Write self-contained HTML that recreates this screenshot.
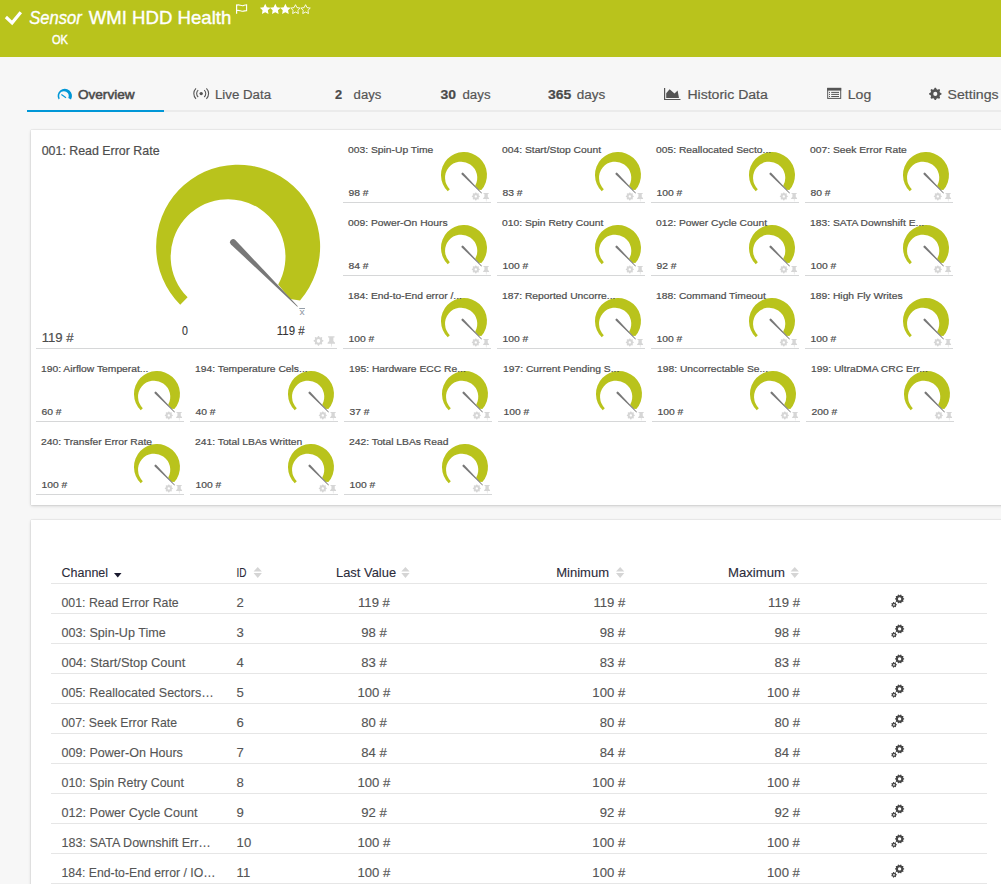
<!DOCTYPE html>
<html><head><meta charset="utf-8"><style>
html,body{margin:0;padding:0}
body{width:1001px;height:884px;overflow:hidden;position:relative;background:#f7f7f7;font-family:"Liberation Sans", sans-serif}
svg{overflow:visible}
</style></head><body>
<div style="position:absolute;left:0;top:0;width:1001px;height:57px;background:#b9c31c"></div>
<svg style="position:absolute;left:0;top:0" width="330" height="57"><path d="M5.9 17.0 L12.1 22.8 L20.8 12.3" fill="none" stroke="#fff" stroke-width="3.2"/><path d="M236.6 4.5 L236.6 13.8" stroke="#fff" stroke-width="1.2"/><path d="M236.6 5.2 C239 4 241 6.2 243.2 5.6 C244.6 5.2 245.6 4.8 246.6 4.8 L246.6 10.6 C245 10.6 244 11.4 242 11.2 C240 11 239 9.8 236.6 10.6" fill="none" stroke="#fff" stroke-width="1.1"/><path d="M265.20 3.80 L266.85 7.13 L270.53 7.67 L267.86 10.27 L268.49 13.93 L265.20 12.20 L261.91 13.93 L262.54 10.27 L259.87 7.67 L263.55 7.13 Z" fill="#fff"/><path d="M275.30 3.80 L276.95 7.13 L280.63 7.67 L277.96 10.27 L278.59 13.93 L275.30 12.20 L272.01 13.93 L272.64 10.27 L269.97 7.67 L273.65 7.13 Z" fill="#fff"/><path d="M285.40 3.80 L287.05 7.13 L290.73 7.67 L288.06 10.27 L288.69 13.93 L285.40 12.20 L282.11 13.93 L282.74 10.27 L280.07 7.67 L283.75 7.13 Z" fill="#fff"/><path d="M295.50 4.70 L296.94 7.62 L300.16 8.09 L297.83 10.36 L298.38 13.56 L295.50 12.05 L292.62 13.56 L293.17 10.36 L290.84 8.09 L294.06 7.62 Z" fill="none" stroke="#fff" stroke-width="0.9"/><path d="M305.60 4.70 L307.04 7.62 L310.26 8.09 L307.93 10.36 L308.48 13.56 L305.60 12.05 L302.72 13.56 L303.27 10.36 L300.94 8.09 L304.16 7.62 Z" fill="none" stroke="#fff" stroke-width="0.9"/></svg>
<div style="position:absolute;left:27px;top:110px;width:974px;height:2px;background:#ebebeb"></div>
<div style="position:absolute;left:27px;top:110px;width:137px;height:2px;background:#0097d7"></div>
<svg style="position:absolute;left:0;top:80px" width="1001" height="30" viewBox="0 80 1001 30"><path fill="#0097d7" d="M58.6 99.6 A7.2 7.2 0 1 1 71.0 99.6 L68.3 97.9 A4.75 4.75 0 1 0 59.8 98.2 Z"/><path d="M61.4 94.5 L66.0 97.7" stroke="#0097d7" stroke-width="1.1"/><circle cx="201.2" cy="93.6" r="1.7" fill="#555"/><path d="M198.2 90.2 A4.5 4.5 0 0 0 198.2 97.0 M204.2 90.2 A4.5 4.5 0 0 1 204.2 97.0" fill="none" stroke="#555" stroke-width="1.1"/><path d="M196.0 88.3 A7.5 7.5 0 0 0 196.0 98.9 M206.4 88.3 A7.5 7.5 0 0 1 206.4 98.9" fill="none" stroke="#555" stroke-width="1.1"/><path fill="#555" d="M664 88 L665.2 88 L665.2 99 L680.5 99 L680.5 100 L664 100 Z"/><path fill="#555" d="M666.2 98 L666.2 93.2 L669.6 89.2 L674.5 93.5 L677.6 90.6 L679 98 Z"/><rect x="827.7" y="88.4" width="13" height="10" fill="none" stroke="#555" stroke-width="1"/><rect x="827.2" y="87.9" width="14" height="2.7" fill="#555"/><rect x="829.0" y="91.9" width="1" height="1" fill="#555"/><rect x="831.2" y="91.9" width="7.8" height="1" fill="#555"/><rect x="829.0" y="93.9" width="1" height="1" fill="#555"/><rect x="831.2" y="93.9" width="7.8" height="1" fill="#555"/><rect x="829.0" y="96.0" width="1" height="1" fill="#555"/><rect x="831.2" y="96.0" width="7.8" height="1" fill="#555"/><path fill-rule="evenodd" fill="#555" d="M941.47 93.29 L941.47 94.51 L939.93 95.30 L939.56 96.18 L940.09 97.83 L939.23 98.69 L937.58 98.16 L936.70 98.53 L935.91 100.07 L934.69 100.07 L933.90 98.53 L933.02 98.16 L931.37 98.69 L930.51 97.83 L931.04 96.18 L930.67 95.30 L929.13 94.51 L929.13 93.29 L930.67 92.50 L931.04 91.62 L930.51 89.97 L931.37 89.11 L933.02 89.64 L933.90 89.27 L934.69 87.73 L935.91 87.73 L936.70 89.27 L937.58 89.64 L939.23 89.11 L940.09 89.97 L939.56 91.62 L939.93 92.50 Z M937.35 93.90 A2.05 2.05 0 1 0 933.25 93.90 A2.05 2.05 0 1 0 937.35 93.90 Z"/></svg>
<div style="position:absolute;left:31px;top:130px;width:1000px;height:375px;background:#fff;box-shadow:0 0 1px rgba(0,0,0,0.22),0 1px 3px rgba(0,0,0,0.16)"></div>
<div style="position:absolute;left:31px;top:520px;width:1000px;height:400px;background:#fff;box-shadow:0 0 1px rgba(0,0,0,0.22),0 1px 3px rgba(0,0,0,0.16)"></div>
<svg style="position:absolute;left:0;top:0" width="1001" height="520"><rect x="36" y="348" width="301" height="1" fill="#d6d7d8"/><path fill="#b9c31c" d="M180.22 304.68 A82.00 82.00 0 1 1 300.03 300.41 L290.02 299.02 L278.22 284.50 A57.40 57.40 0 1 0 187.61 297.29 Z"/><path fill="#787878" d="M230.93 244.38 L297.32 306.73 L297.82 306.23 L235.31 240.00 A3.10 3.10 0 0 0 230.93 244.38 Z"/><path fill-rule="evenodd" fill="#d6d6d6" d="M323.38 340.32 L323.38 341.28 L322.16 341.91 L321.87 342.60 L322.29 343.91 L321.61 344.59 L320.30 344.17 L319.61 344.46 L318.98 345.68 L318.02 345.68 L317.39 344.46 L316.70 344.17 L315.39 344.59 L314.71 343.91 L315.13 342.60 L314.84 341.91 L313.62 341.28 L313.62 340.32 L314.84 339.69 L315.13 339.00 L314.71 337.69 L315.39 337.01 L316.70 337.43 L317.39 337.14 L318.02 335.92 L318.98 335.92 L319.61 337.14 L320.30 337.43 L321.61 337.01 L322.29 337.69 L321.87 339.00 L322.16 339.69 Z M320.21 340.80 A1.72 1.72 0 1 0 316.79 340.80 A1.72 1.72 0 1 0 320.21 340.80 Z"/><path fill="#d6d6d6" d="M328.10 336.20 L334.50 336.20 L334.50 337.50 L333.40 337.50 L333.40 341.00 L335.00 342.80 L335.00 343.80 L331.80 343.80 L331.60 346.70 L331.20 346.70 L331.00 343.80 L327.60 343.80 L327.60 342.80 L329.20 341.00 L329.20 337.50 L328.10 337.50 Z"/><rect x="299.2" y="308" width="5.8" height="0.9" fill="#8a94a0"/><rect x="343" y="202" width="148" height="1" fill="#d6d7d8"/><path fill="#b9c31c" d="M447.74 191.26 A23.00 23.00 0 1 1 481.34 190.06 L478.54 189.67 L475.22 185.60 A16.10 16.10 0 1 0 449.81 189.19 Z"/><path fill="#787878" d="M461.75 174.54 L481.50 193.38 L481.92 192.96 L463.39 172.93 A1.15 1.15 0 0 0 461.75 174.54 Z"/><path fill-rule="evenodd" fill="#d6d6d6" d="M479.78 196.01 L479.78 196.79 L478.86 197.33 L478.62 197.91 L478.89 198.94 L478.34 199.49 L477.31 199.22 L476.73 199.46 L476.19 200.38 L475.41 200.38 L474.87 199.46 L474.29 199.22 L473.26 199.49 L472.71 198.94 L472.98 197.91 L472.74 197.33 L471.82 196.79 L471.82 196.01 L472.74 195.47 L472.98 194.89 L472.71 193.86 L473.26 193.31 L474.29 193.58 L474.87 193.34 L475.41 192.42 L476.19 192.42 L476.73 193.34 L477.31 193.58 L478.34 193.31 L478.89 193.86 L478.62 194.89 L478.86 195.47 Z M477.00 196.40 A1.20 1.20 0 1 0 474.60 196.40 A1.20 1.20 0 1 0 477.00 196.40 Z"/><path fill="#d6d6d6" d="M483.54 193.00 L488.66 193.00 L488.66 194.04 L487.78 194.04 L487.78 196.84 L489.06 198.28 L489.06 199.08 L486.50 199.08 L486.34 201.40 L486.02 201.40 L485.86 199.08 L483.14 199.08 L483.14 198.28 L484.42 196.84 L484.42 194.04 L483.54 194.04 Z"/><rect x="497" y="202" width="148" height="1" fill="#d6d7d8"/><path fill="#b9c31c" d="M601.74 191.26 A23.00 23.00 0 1 1 635.34 190.06 L632.54 189.67 L629.22 185.60 A16.10 16.10 0 1 0 603.81 189.19 Z"/><path fill="#787878" d="M615.75 174.54 L635.50 193.38 L635.92 192.96 L617.39 172.93 A1.15 1.15 0 0 0 615.75 174.54 Z"/><path fill-rule="evenodd" fill="#d6d6d6" d="M633.78 196.01 L633.78 196.79 L632.86 197.33 L632.62 197.91 L632.89 198.94 L632.34 199.49 L631.31 199.22 L630.73 199.46 L630.19 200.38 L629.41 200.38 L628.87 199.46 L628.29 199.22 L627.26 199.49 L626.71 198.94 L626.98 197.91 L626.74 197.33 L625.82 196.79 L625.82 196.01 L626.74 195.47 L626.98 194.89 L626.71 193.86 L627.26 193.31 L628.29 193.58 L628.87 193.34 L629.41 192.42 L630.19 192.42 L630.73 193.34 L631.31 193.58 L632.34 193.31 L632.89 193.86 L632.62 194.89 L632.86 195.47 Z M631.00 196.40 A1.20 1.20 0 1 0 628.60 196.40 A1.20 1.20 0 1 0 631.00 196.40 Z"/><path fill="#d6d6d6" d="M637.54 193.00 L642.66 193.00 L642.66 194.04 L641.78 194.04 L641.78 196.84 L643.06 198.28 L643.06 199.08 L640.50 199.08 L640.34 201.40 L640.02 201.40 L639.86 199.08 L637.14 199.08 L637.14 198.28 L638.42 196.84 L638.42 194.04 L637.54 194.04 Z"/><rect x="651" y="202" width="148" height="1" fill="#d6d7d8"/><path fill="#b9c31c" d="M755.74 191.26 A23.00 23.00 0 1 1 789.34 190.06 L786.54 189.67 L783.22 185.60 A16.10 16.10 0 1 0 757.81 189.19 Z"/><path fill="#787878" d="M769.75 174.54 L789.50 193.38 L789.92 192.96 L771.39 172.93 A1.15 1.15 0 0 0 769.75 174.54 Z"/><path fill-rule="evenodd" fill="#d6d6d6" d="M787.78 196.01 L787.78 196.79 L786.86 197.33 L786.62 197.91 L786.89 198.94 L786.34 199.49 L785.31 199.22 L784.73 199.46 L784.19 200.38 L783.41 200.38 L782.87 199.46 L782.29 199.22 L781.26 199.49 L780.71 198.94 L780.98 197.91 L780.74 197.33 L779.82 196.79 L779.82 196.01 L780.74 195.47 L780.98 194.89 L780.71 193.86 L781.26 193.31 L782.29 193.58 L782.87 193.34 L783.41 192.42 L784.19 192.42 L784.73 193.34 L785.31 193.58 L786.34 193.31 L786.89 193.86 L786.62 194.89 L786.86 195.47 Z M785.00 196.40 A1.20 1.20 0 1 0 782.60 196.40 A1.20 1.20 0 1 0 785.00 196.40 Z"/><path fill="#d6d6d6" d="M791.54 193.00 L796.66 193.00 L796.66 194.04 L795.78 194.04 L795.78 196.84 L797.06 198.28 L797.06 199.08 L794.50 199.08 L794.34 201.40 L794.02 201.40 L793.86 199.08 L791.14 199.08 L791.14 198.28 L792.42 196.84 L792.42 194.04 L791.54 194.04 Z"/><rect x="805" y="202" width="148" height="1" fill="#d6d7d8"/><path fill="#b9c31c" d="M909.74 191.26 A23.00 23.00 0 1 1 943.34 190.06 L940.54 189.67 L937.22 185.60 A16.10 16.10 0 1 0 911.81 189.19 Z"/><path fill="#787878" d="M923.75 174.54 L943.50 193.38 L943.92 192.96 L925.39 172.93 A1.15 1.15 0 0 0 923.75 174.54 Z"/><path fill-rule="evenodd" fill="#d6d6d6" d="M941.78 196.01 L941.78 196.79 L940.86 197.33 L940.62 197.91 L940.89 198.94 L940.34 199.49 L939.31 199.22 L938.73 199.46 L938.19 200.38 L937.41 200.38 L936.87 199.46 L936.29 199.22 L935.26 199.49 L934.71 198.94 L934.98 197.91 L934.74 197.33 L933.82 196.79 L933.82 196.01 L934.74 195.47 L934.98 194.89 L934.71 193.86 L935.26 193.31 L936.29 193.58 L936.87 193.34 L937.41 192.42 L938.19 192.42 L938.73 193.34 L939.31 193.58 L940.34 193.31 L940.89 193.86 L940.62 194.89 L940.86 195.47 Z M939.00 196.40 A1.20 1.20 0 1 0 936.60 196.40 A1.20 1.20 0 1 0 939.00 196.40 Z"/><path fill="#d6d6d6" d="M945.54 193.00 L950.66 193.00 L950.66 194.04 L949.78 194.04 L949.78 196.84 L951.06 198.28 L951.06 199.08 L948.50 199.08 L948.34 201.40 L948.02 201.40 L947.86 199.08 L945.14 199.08 L945.14 198.28 L946.42 196.84 L946.42 194.04 L945.54 194.04 Z"/><rect x="343" y="275" width="148" height="1" fill="#d6d7d8"/><path fill="#b9c31c" d="M447.74 264.26 A23.00 23.00 0 1 1 481.34 263.06 L478.54 262.67 L475.22 258.60 A16.10 16.10 0 1 0 449.81 262.19 Z"/><path fill="#787878" d="M461.75 247.54 L481.50 266.38 L481.92 265.96 L463.39 245.93 A1.15 1.15 0 0 0 461.75 247.54 Z"/><path fill-rule="evenodd" fill="#d6d6d6" d="M479.78 269.01 L479.78 269.79 L478.86 270.33 L478.62 270.91 L478.89 271.94 L478.34 272.49 L477.31 272.22 L476.73 272.46 L476.19 273.38 L475.41 273.38 L474.87 272.46 L474.29 272.22 L473.26 272.49 L472.71 271.94 L472.98 270.91 L472.74 270.33 L471.82 269.79 L471.82 269.01 L472.74 268.47 L472.98 267.89 L472.71 266.86 L473.26 266.31 L474.29 266.58 L474.87 266.34 L475.41 265.42 L476.19 265.42 L476.73 266.34 L477.31 266.58 L478.34 266.31 L478.89 266.86 L478.62 267.89 L478.86 268.47 Z M477.00 269.40 A1.20 1.20 0 1 0 474.60 269.40 A1.20 1.20 0 1 0 477.00 269.40 Z"/><path fill="#d6d6d6" d="M483.54 266.00 L488.66 266.00 L488.66 267.04 L487.78 267.04 L487.78 269.84 L489.06 271.28 L489.06 272.08 L486.50 272.08 L486.34 274.40 L486.02 274.40 L485.86 272.08 L483.14 272.08 L483.14 271.28 L484.42 269.84 L484.42 267.04 L483.54 267.04 Z"/><rect x="497" y="275" width="148" height="1" fill="#d6d7d8"/><path fill="#b9c31c" d="M601.74 264.26 A23.00 23.00 0 1 1 635.34 263.06 L632.54 262.67 L629.22 258.60 A16.10 16.10 0 1 0 603.81 262.19 Z"/><path fill="#787878" d="M615.75 247.54 L635.50 266.38 L635.92 265.96 L617.39 245.93 A1.15 1.15 0 0 0 615.75 247.54 Z"/><path fill-rule="evenodd" fill="#d6d6d6" d="M633.78 269.01 L633.78 269.79 L632.86 270.33 L632.62 270.91 L632.89 271.94 L632.34 272.49 L631.31 272.22 L630.73 272.46 L630.19 273.38 L629.41 273.38 L628.87 272.46 L628.29 272.22 L627.26 272.49 L626.71 271.94 L626.98 270.91 L626.74 270.33 L625.82 269.79 L625.82 269.01 L626.74 268.47 L626.98 267.89 L626.71 266.86 L627.26 266.31 L628.29 266.58 L628.87 266.34 L629.41 265.42 L630.19 265.42 L630.73 266.34 L631.31 266.58 L632.34 266.31 L632.89 266.86 L632.62 267.89 L632.86 268.47 Z M631.00 269.40 A1.20 1.20 0 1 0 628.60 269.40 A1.20 1.20 0 1 0 631.00 269.40 Z"/><path fill="#d6d6d6" d="M637.54 266.00 L642.66 266.00 L642.66 267.04 L641.78 267.04 L641.78 269.84 L643.06 271.28 L643.06 272.08 L640.50 272.08 L640.34 274.40 L640.02 274.40 L639.86 272.08 L637.14 272.08 L637.14 271.28 L638.42 269.84 L638.42 267.04 L637.54 267.04 Z"/><rect x="651" y="275" width="148" height="1" fill="#d6d7d8"/><path fill="#b9c31c" d="M755.74 264.26 A23.00 23.00 0 1 1 789.34 263.06 L786.54 262.67 L783.22 258.60 A16.10 16.10 0 1 0 757.81 262.19 Z"/><path fill="#787878" d="M769.75 247.54 L789.50 266.38 L789.92 265.96 L771.39 245.93 A1.15 1.15 0 0 0 769.75 247.54 Z"/><path fill-rule="evenodd" fill="#d6d6d6" d="M787.78 269.01 L787.78 269.79 L786.86 270.33 L786.62 270.91 L786.89 271.94 L786.34 272.49 L785.31 272.22 L784.73 272.46 L784.19 273.38 L783.41 273.38 L782.87 272.46 L782.29 272.22 L781.26 272.49 L780.71 271.94 L780.98 270.91 L780.74 270.33 L779.82 269.79 L779.82 269.01 L780.74 268.47 L780.98 267.89 L780.71 266.86 L781.26 266.31 L782.29 266.58 L782.87 266.34 L783.41 265.42 L784.19 265.42 L784.73 266.34 L785.31 266.58 L786.34 266.31 L786.89 266.86 L786.62 267.89 L786.86 268.47 Z M785.00 269.40 A1.20 1.20 0 1 0 782.60 269.40 A1.20 1.20 0 1 0 785.00 269.40 Z"/><path fill="#d6d6d6" d="M791.54 266.00 L796.66 266.00 L796.66 267.04 L795.78 267.04 L795.78 269.84 L797.06 271.28 L797.06 272.08 L794.50 272.08 L794.34 274.40 L794.02 274.40 L793.86 272.08 L791.14 272.08 L791.14 271.28 L792.42 269.84 L792.42 267.04 L791.54 267.04 Z"/><rect x="805" y="275" width="148" height="1" fill="#d6d7d8"/><path fill="#b9c31c" d="M909.74 264.26 A23.00 23.00 0 1 1 943.34 263.06 L940.54 262.67 L937.22 258.60 A16.10 16.10 0 1 0 911.81 262.19 Z"/><path fill="#787878" d="M923.75 247.54 L943.50 266.38 L943.92 265.96 L925.39 245.93 A1.15 1.15 0 0 0 923.75 247.54 Z"/><path fill-rule="evenodd" fill="#d6d6d6" d="M941.78 269.01 L941.78 269.79 L940.86 270.33 L940.62 270.91 L940.89 271.94 L940.34 272.49 L939.31 272.22 L938.73 272.46 L938.19 273.38 L937.41 273.38 L936.87 272.46 L936.29 272.22 L935.26 272.49 L934.71 271.94 L934.98 270.91 L934.74 270.33 L933.82 269.79 L933.82 269.01 L934.74 268.47 L934.98 267.89 L934.71 266.86 L935.26 266.31 L936.29 266.58 L936.87 266.34 L937.41 265.42 L938.19 265.42 L938.73 266.34 L939.31 266.58 L940.34 266.31 L940.89 266.86 L940.62 267.89 L940.86 268.47 Z M939.00 269.40 A1.20 1.20 0 1 0 936.60 269.40 A1.20 1.20 0 1 0 939.00 269.40 Z"/><path fill="#d6d6d6" d="M945.54 266.00 L950.66 266.00 L950.66 267.04 L949.78 267.04 L949.78 269.84 L951.06 271.28 L951.06 272.08 L948.50 272.08 L948.34 274.40 L948.02 274.40 L947.86 272.08 L945.14 272.08 L945.14 271.28 L946.42 269.84 L946.42 267.04 L945.54 267.04 Z"/><rect x="343" y="348" width="148" height="1" fill="#d6d7d8"/><path fill="#b9c31c" d="M447.74 337.26 A23.00 23.00 0 1 1 481.34 336.06 L478.54 335.67 L475.22 331.60 A16.10 16.10 0 1 0 449.81 335.19 Z"/><path fill="#787878" d="M461.75 320.54 L481.50 339.38 L481.92 338.96 L463.39 318.93 A1.15 1.15 0 0 0 461.75 320.54 Z"/><path fill-rule="evenodd" fill="#d6d6d6" d="M479.78 342.01 L479.78 342.79 L478.86 343.33 L478.62 343.91 L478.89 344.94 L478.34 345.49 L477.31 345.22 L476.73 345.46 L476.19 346.38 L475.41 346.38 L474.87 345.46 L474.29 345.22 L473.26 345.49 L472.71 344.94 L472.98 343.91 L472.74 343.33 L471.82 342.79 L471.82 342.01 L472.74 341.47 L472.98 340.89 L472.71 339.86 L473.26 339.31 L474.29 339.58 L474.87 339.34 L475.41 338.42 L476.19 338.42 L476.73 339.34 L477.31 339.58 L478.34 339.31 L478.89 339.86 L478.62 340.89 L478.86 341.47 Z M477.00 342.40 A1.20 1.20 0 1 0 474.60 342.40 A1.20 1.20 0 1 0 477.00 342.40 Z"/><path fill="#d6d6d6" d="M483.54 339.00 L488.66 339.00 L488.66 340.04 L487.78 340.04 L487.78 342.84 L489.06 344.28 L489.06 345.08 L486.50 345.08 L486.34 347.40 L486.02 347.40 L485.86 345.08 L483.14 345.08 L483.14 344.28 L484.42 342.84 L484.42 340.04 L483.54 340.04 Z"/><rect x="497" y="348" width="148" height="1" fill="#d6d7d8"/><path fill="#b9c31c" d="M601.74 337.26 A23.00 23.00 0 1 1 635.34 336.06 L632.54 335.67 L629.22 331.60 A16.10 16.10 0 1 0 603.81 335.19 Z"/><path fill="#787878" d="M615.75 320.54 L635.50 339.38 L635.92 338.96 L617.39 318.93 A1.15 1.15 0 0 0 615.75 320.54 Z"/><path fill-rule="evenodd" fill="#d6d6d6" d="M633.78 342.01 L633.78 342.79 L632.86 343.33 L632.62 343.91 L632.89 344.94 L632.34 345.49 L631.31 345.22 L630.73 345.46 L630.19 346.38 L629.41 346.38 L628.87 345.46 L628.29 345.22 L627.26 345.49 L626.71 344.94 L626.98 343.91 L626.74 343.33 L625.82 342.79 L625.82 342.01 L626.74 341.47 L626.98 340.89 L626.71 339.86 L627.26 339.31 L628.29 339.58 L628.87 339.34 L629.41 338.42 L630.19 338.42 L630.73 339.34 L631.31 339.58 L632.34 339.31 L632.89 339.86 L632.62 340.89 L632.86 341.47 Z M631.00 342.40 A1.20 1.20 0 1 0 628.60 342.40 A1.20 1.20 0 1 0 631.00 342.40 Z"/><path fill="#d6d6d6" d="M637.54 339.00 L642.66 339.00 L642.66 340.04 L641.78 340.04 L641.78 342.84 L643.06 344.28 L643.06 345.08 L640.50 345.08 L640.34 347.40 L640.02 347.40 L639.86 345.08 L637.14 345.08 L637.14 344.28 L638.42 342.84 L638.42 340.04 L637.54 340.04 Z"/><rect x="651" y="348" width="148" height="1" fill="#d6d7d8"/><path fill="#b9c31c" d="M755.74 337.26 A23.00 23.00 0 1 1 789.34 336.06 L786.54 335.67 L783.22 331.60 A16.10 16.10 0 1 0 757.81 335.19 Z"/><path fill="#787878" d="M769.75 320.54 L789.50 339.38 L789.92 338.96 L771.39 318.93 A1.15 1.15 0 0 0 769.75 320.54 Z"/><path fill-rule="evenodd" fill="#d6d6d6" d="M787.78 342.01 L787.78 342.79 L786.86 343.33 L786.62 343.91 L786.89 344.94 L786.34 345.49 L785.31 345.22 L784.73 345.46 L784.19 346.38 L783.41 346.38 L782.87 345.46 L782.29 345.22 L781.26 345.49 L780.71 344.94 L780.98 343.91 L780.74 343.33 L779.82 342.79 L779.82 342.01 L780.74 341.47 L780.98 340.89 L780.71 339.86 L781.26 339.31 L782.29 339.58 L782.87 339.34 L783.41 338.42 L784.19 338.42 L784.73 339.34 L785.31 339.58 L786.34 339.31 L786.89 339.86 L786.62 340.89 L786.86 341.47 Z M785.00 342.40 A1.20 1.20 0 1 0 782.60 342.40 A1.20 1.20 0 1 0 785.00 342.40 Z"/><path fill="#d6d6d6" d="M791.54 339.00 L796.66 339.00 L796.66 340.04 L795.78 340.04 L795.78 342.84 L797.06 344.28 L797.06 345.08 L794.50 345.08 L794.34 347.40 L794.02 347.40 L793.86 345.08 L791.14 345.08 L791.14 344.28 L792.42 342.84 L792.42 340.04 L791.54 340.04 Z"/><rect x="805" y="348" width="148" height="1" fill="#d6d7d8"/><path fill="#b9c31c" d="M909.74 337.26 A23.00 23.00 0 1 1 943.34 336.06 L940.54 335.67 L937.22 331.60 A16.10 16.10 0 1 0 911.81 335.19 Z"/><path fill="#787878" d="M923.75 320.54 L943.50 339.38 L943.92 338.96 L925.39 318.93 A1.15 1.15 0 0 0 923.75 320.54 Z"/><path fill-rule="evenodd" fill="#d6d6d6" d="M941.78 342.01 L941.78 342.79 L940.86 343.33 L940.62 343.91 L940.89 344.94 L940.34 345.49 L939.31 345.22 L938.73 345.46 L938.19 346.38 L937.41 346.38 L936.87 345.46 L936.29 345.22 L935.26 345.49 L934.71 344.94 L934.98 343.91 L934.74 343.33 L933.82 342.79 L933.82 342.01 L934.74 341.47 L934.98 340.89 L934.71 339.86 L935.26 339.31 L936.29 339.58 L936.87 339.34 L937.41 338.42 L938.19 338.42 L938.73 339.34 L939.31 339.58 L940.34 339.31 L940.89 339.86 L940.62 340.89 L940.86 341.47 Z M939.00 342.40 A1.20 1.20 0 1 0 936.60 342.40 A1.20 1.20 0 1 0 939.00 342.40 Z"/><path fill="#d6d6d6" d="M945.54 339.00 L950.66 339.00 L950.66 340.04 L949.78 340.04 L949.78 342.84 L951.06 344.28 L951.06 345.08 L948.50 345.08 L948.34 347.40 L948.02 347.40 L947.86 345.08 L945.14 345.08 L945.14 344.28 L946.42 342.84 L946.42 340.04 L945.54 340.04 Z"/><rect x="36" y="421" width="148" height="1" fill="#d6d7d8"/><path fill="#b9c31c" d="M140.74 410.26 A23.00 23.00 0 1 1 174.34 409.06 L171.54 408.67 L168.22 404.60 A16.10 16.10 0 1 0 142.81 408.19 Z"/><path fill="#787878" d="M154.75 393.54 L174.50 412.38 L174.92 411.96 L156.39 391.93 A1.15 1.15 0 0 0 154.75 393.54 Z"/><path fill-rule="evenodd" fill="#d6d6d6" d="M172.78 415.01 L172.78 415.79 L171.86 416.33 L171.62 416.91 L171.89 417.94 L171.34 418.49 L170.31 418.22 L169.73 418.46 L169.19 419.38 L168.41 419.38 L167.87 418.46 L167.29 418.22 L166.26 418.49 L165.71 417.94 L165.98 416.91 L165.74 416.33 L164.82 415.79 L164.82 415.01 L165.74 414.47 L165.98 413.89 L165.71 412.86 L166.26 412.31 L167.29 412.58 L167.87 412.34 L168.41 411.42 L169.19 411.42 L169.73 412.34 L170.31 412.58 L171.34 412.31 L171.89 412.86 L171.62 413.89 L171.86 414.47 Z M170.00 415.40 A1.20 1.20 0 1 0 167.60 415.40 A1.20 1.20 0 1 0 170.00 415.40 Z"/><path fill="#d6d6d6" d="M176.54 412.00 L181.66 412.00 L181.66 413.04 L180.78 413.04 L180.78 415.84 L182.06 417.28 L182.06 418.08 L179.50 418.08 L179.34 420.40 L179.02 420.40 L178.86 418.08 L176.14 418.08 L176.14 417.28 L177.42 415.84 L177.42 413.04 L176.54 413.04 Z"/><rect x="190" y="421" width="148" height="1" fill="#d6d7d8"/><path fill="#b9c31c" d="M294.74 410.26 A23.00 23.00 0 1 1 328.34 409.06 L325.54 408.67 L322.22 404.60 A16.10 16.10 0 1 0 296.81 408.19 Z"/><path fill="#787878" d="M308.75 393.54 L328.50 412.38 L328.92 411.96 L310.39 391.93 A1.15 1.15 0 0 0 308.75 393.54 Z"/><path fill-rule="evenodd" fill="#d6d6d6" d="M326.78 415.01 L326.78 415.79 L325.86 416.33 L325.62 416.91 L325.89 417.94 L325.34 418.49 L324.31 418.22 L323.73 418.46 L323.19 419.38 L322.41 419.38 L321.87 418.46 L321.29 418.22 L320.26 418.49 L319.71 417.94 L319.98 416.91 L319.74 416.33 L318.82 415.79 L318.82 415.01 L319.74 414.47 L319.98 413.89 L319.71 412.86 L320.26 412.31 L321.29 412.58 L321.87 412.34 L322.41 411.42 L323.19 411.42 L323.73 412.34 L324.31 412.58 L325.34 412.31 L325.89 412.86 L325.62 413.89 L325.86 414.47 Z M324.00 415.40 A1.20 1.20 0 1 0 321.60 415.40 A1.20 1.20 0 1 0 324.00 415.40 Z"/><path fill="#d6d6d6" d="M330.54 412.00 L335.66 412.00 L335.66 413.04 L334.78 413.04 L334.78 415.84 L336.06 417.28 L336.06 418.08 L333.50 418.08 L333.34 420.40 L333.02 420.40 L332.86 418.08 L330.14 418.08 L330.14 417.28 L331.42 415.84 L331.42 413.04 L330.54 413.04 Z"/><rect x="344" y="421" width="148" height="1" fill="#d6d7d8"/><path fill="#b9c31c" d="M448.74 410.26 A23.00 23.00 0 1 1 482.34 409.06 L479.54 408.67 L476.22 404.60 A16.10 16.10 0 1 0 450.81 408.19 Z"/><path fill="#787878" d="M462.75 393.54 L482.50 412.38 L482.92 411.96 L464.39 391.93 A1.15 1.15 0 0 0 462.75 393.54 Z"/><path fill-rule="evenodd" fill="#d6d6d6" d="M480.78 415.01 L480.78 415.79 L479.86 416.33 L479.62 416.91 L479.89 417.94 L479.34 418.49 L478.31 418.22 L477.73 418.46 L477.19 419.38 L476.41 419.38 L475.87 418.46 L475.29 418.22 L474.26 418.49 L473.71 417.94 L473.98 416.91 L473.74 416.33 L472.82 415.79 L472.82 415.01 L473.74 414.47 L473.98 413.89 L473.71 412.86 L474.26 412.31 L475.29 412.58 L475.87 412.34 L476.41 411.42 L477.19 411.42 L477.73 412.34 L478.31 412.58 L479.34 412.31 L479.89 412.86 L479.62 413.89 L479.86 414.47 Z M478.00 415.40 A1.20 1.20 0 1 0 475.60 415.40 A1.20 1.20 0 1 0 478.00 415.40 Z"/><path fill="#d6d6d6" d="M484.54 412.00 L489.66 412.00 L489.66 413.04 L488.78 413.04 L488.78 415.84 L490.06 417.28 L490.06 418.08 L487.50 418.08 L487.34 420.40 L487.02 420.40 L486.86 418.08 L484.14 418.08 L484.14 417.28 L485.42 415.84 L485.42 413.04 L484.54 413.04 Z"/><rect x="498" y="421" width="148" height="1" fill="#d6d7d8"/><path fill="#b9c31c" d="M602.74 410.26 A23.00 23.00 0 1 1 636.34 409.06 L633.54 408.67 L630.22 404.60 A16.10 16.10 0 1 0 604.81 408.19 Z"/><path fill="#787878" d="M616.75 393.54 L636.50 412.38 L636.92 411.96 L618.39 391.93 A1.15 1.15 0 0 0 616.75 393.54 Z"/><path fill-rule="evenodd" fill="#d6d6d6" d="M634.78 415.01 L634.78 415.79 L633.86 416.33 L633.62 416.91 L633.89 417.94 L633.34 418.49 L632.31 418.22 L631.73 418.46 L631.19 419.38 L630.41 419.38 L629.87 418.46 L629.29 418.22 L628.26 418.49 L627.71 417.94 L627.98 416.91 L627.74 416.33 L626.82 415.79 L626.82 415.01 L627.74 414.47 L627.98 413.89 L627.71 412.86 L628.26 412.31 L629.29 412.58 L629.87 412.34 L630.41 411.42 L631.19 411.42 L631.73 412.34 L632.31 412.58 L633.34 412.31 L633.89 412.86 L633.62 413.89 L633.86 414.47 Z M632.00 415.40 A1.20 1.20 0 1 0 629.60 415.40 A1.20 1.20 0 1 0 632.00 415.40 Z"/><path fill="#d6d6d6" d="M638.54 412.00 L643.66 412.00 L643.66 413.04 L642.78 413.04 L642.78 415.84 L644.06 417.28 L644.06 418.08 L641.50 418.08 L641.34 420.40 L641.02 420.40 L640.86 418.08 L638.14 418.08 L638.14 417.28 L639.42 415.84 L639.42 413.04 L638.54 413.04 Z"/><rect x="652" y="421" width="148" height="1" fill="#d6d7d8"/><path fill="#b9c31c" d="M756.74 410.26 A23.00 23.00 0 1 1 790.34 409.06 L787.54 408.67 L784.22 404.60 A16.10 16.10 0 1 0 758.81 408.19 Z"/><path fill="#787878" d="M770.75 393.54 L790.50 412.38 L790.92 411.96 L772.39 391.93 A1.15 1.15 0 0 0 770.75 393.54 Z"/><path fill-rule="evenodd" fill="#d6d6d6" d="M788.78 415.01 L788.78 415.79 L787.86 416.33 L787.62 416.91 L787.89 417.94 L787.34 418.49 L786.31 418.22 L785.73 418.46 L785.19 419.38 L784.41 419.38 L783.87 418.46 L783.29 418.22 L782.26 418.49 L781.71 417.94 L781.98 416.91 L781.74 416.33 L780.82 415.79 L780.82 415.01 L781.74 414.47 L781.98 413.89 L781.71 412.86 L782.26 412.31 L783.29 412.58 L783.87 412.34 L784.41 411.42 L785.19 411.42 L785.73 412.34 L786.31 412.58 L787.34 412.31 L787.89 412.86 L787.62 413.89 L787.86 414.47 Z M786.00 415.40 A1.20 1.20 0 1 0 783.60 415.40 A1.20 1.20 0 1 0 786.00 415.40 Z"/><path fill="#d6d6d6" d="M792.54 412.00 L797.66 412.00 L797.66 413.04 L796.78 413.04 L796.78 415.84 L798.06 417.28 L798.06 418.08 L795.50 418.08 L795.34 420.40 L795.02 420.40 L794.86 418.08 L792.14 418.08 L792.14 417.28 L793.42 415.84 L793.42 413.04 L792.54 413.04 Z"/><rect x="806" y="421" width="148" height="1" fill="#d6d7d8"/><path fill="#b9c31c" d="M910.74 410.26 A23.00 23.00 0 1 1 944.34 409.06 L941.54 408.67 L938.22 404.60 A16.10 16.10 0 1 0 912.81 408.19 Z"/><path fill="#787878" d="M924.75 393.54 L944.50 412.38 L944.92 411.96 L926.39 391.93 A1.15 1.15 0 0 0 924.75 393.54 Z"/><path fill-rule="evenodd" fill="#d6d6d6" d="M942.78 415.01 L942.78 415.79 L941.86 416.33 L941.62 416.91 L941.89 417.94 L941.34 418.49 L940.31 418.22 L939.73 418.46 L939.19 419.38 L938.41 419.38 L937.87 418.46 L937.29 418.22 L936.26 418.49 L935.71 417.94 L935.98 416.91 L935.74 416.33 L934.82 415.79 L934.82 415.01 L935.74 414.47 L935.98 413.89 L935.71 412.86 L936.26 412.31 L937.29 412.58 L937.87 412.34 L938.41 411.42 L939.19 411.42 L939.73 412.34 L940.31 412.58 L941.34 412.31 L941.89 412.86 L941.62 413.89 L941.86 414.47 Z M940.00 415.40 A1.20 1.20 0 1 0 937.60 415.40 A1.20 1.20 0 1 0 940.00 415.40 Z"/><path fill="#d6d6d6" d="M946.54 412.00 L951.66 412.00 L951.66 413.04 L950.78 413.04 L950.78 415.84 L952.06 417.28 L952.06 418.08 L949.50 418.08 L949.34 420.40 L949.02 420.40 L948.86 418.08 L946.14 418.08 L946.14 417.28 L947.42 415.84 L947.42 413.04 L946.54 413.04 Z"/><rect x="36" y="494" width="148" height="1" fill="#d6d7d8"/><path fill="#b9c31c" d="M140.74 483.26 A23.00 23.00 0 1 1 174.34 482.06 L171.54 481.67 L168.22 477.60 A16.10 16.10 0 1 0 142.81 481.19 Z"/><path fill="#787878" d="M154.75 466.54 L174.50 485.38 L174.92 484.96 L156.39 464.93 A1.15 1.15 0 0 0 154.75 466.54 Z"/><path fill-rule="evenodd" fill="#d6d6d6" d="M172.78 488.01 L172.78 488.79 L171.86 489.33 L171.62 489.91 L171.89 490.94 L171.34 491.49 L170.31 491.22 L169.73 491.46 L169.19 492.38 L168.41 492.38 L167.87 491.46 L167.29 491.22 L166.26 491.49 L165.71 490.94 L165.98 489.91 L165.74 489.33 L164.82 488.79 L164.82 488.01 L165.74 487.47 L165.98 486.89 L165.71 485.86 L166.26 485.31 L167.29 485.58 L167.87 485.34 L168.41 484.42 L169.19 484.42 L169.73 485.34 L170.31 485.58 L171.34 485.31 L171.89 485.86 L171.62 486.89 L171.86 487.47 Z M170.00 488.40 A1.20 1.20 0 1 0 167.60 488.40 A1.20 1.20 0 1 0 170.00 488.40 Z"/><path fill="#d6d6d6" d="M176.54 485.00 L181.66 485.00 L181.66 486.04 L180.78 486.04 L180.78 488.84 L182.06 490.28 L182.06 491.08 L179.50 491.08 L179.34 493.40 L179.02 493.40 L178.86 491.08 L176.14 491.08 L176.14 490.28 L177.42 488.84 L177.42 486.04 L176.54 486.04 Z"/><rect x="190" y="494" width="148" height="1" fill="#d6d7d8"/><path fill="#b9c31c" d="M294.74 483.26 A23.00 23.00 0 1 1 328.34 482.06 L325.54 481.67 L322.22 477.60 A16.10 16.10 0 1 0 296.81 481.19 Z"/><path fill="#787878" d="M308.75 466.54 L328.50 485.38 L328.92 484.96 L310.39 464.93 A1.15 1.15 0 0 0 308.75 466.54 Z"/><path fill-rule="evenodd" fill="#d6d6d6" d="M326.78 488.01 L326.78 488.79 L325.86 489.33 L325.62 489.91 L325.89 490.94 L325.34 491.49 L324.31 491.22 L323.73 491.46 L323.19 492.38 L322.41 492.38 L321.87 491.46 L321.29 491.22 L320.26 491.49 L319.71 490.94 L319.98 489.91 L319.74 489.33 L318.82 488.79 L318.82 488.01 L319.74 487.47 L319.98 486.89 L319.71 485.86 L320.26 485.31 L321.29 485.58 L321.87 485.34 L322.41 484.42 L323.19 484.42 L323.73 485.34 L324.31 485.58 L325.34 485.31 L325.89 485.86 L325.62 486.89 L325.86 487.47 Z M324.00 488.40 A1.20 1.20 0 1 0 321.60 488.40 A1.20 1.20 0 1 0 324.00 488.40 Z"/><path fill="#d6d6d6" d="M330.54 485.00 L335.66 485.00 L335.66 486.04 L334.78 486.04 L334.78 488.84 L336.06 490.28 L336.06 491.08 L333.50 491.08 L333.34 493.40 L333.02 493.40 L332.86 491.08 L330.14 491.08 L330.14 490.28 L331.42 488.84 L331.42 486.04 L330.54 486.04 Z"/><rect x="344" y="494" width="148" height="1" fill="#d6d7d8"/><path fill="#b9c31c" d="M448.74 483.26 A23.00 23.00 0 1 1 482.34 482.06 L479.54 481.67 L476.22 477.60 A16.10 16.10 0 1 0 450.81 481.19 Z"/><path fill="#787878" d="M462.75 466.54 L482.50 485.38 L482.92 484.96 L464.39 464.93 A1.15 1.15 0 0 0 462.75 466.54 Z"/><path fill-rule="evenodd" fill="#d6d6d6" d="M480.78 488.01 L480.78 488.79 L479.86 489.33 L479.62 489.91 L479.89 490.94 L479.34 491.49 L478.31 491.22 L477.73 491.46 L477.19 492.38 L476.41 492.38 L475.87 491.46 L475.29 491.22 L474.26 491.49 L473.71 490.94 L473.98 489.91 L473.74 489.33 L472.82 488.79 L472.82 488.01 L473.74 487.47 L473.98 486.89 L473.71 485.86 L474.26 485.31 L475.29 485.58 L475.87 485.34 L476.41 484.42 L477.19 484.42 L477.73 485.34 L478.31 485.58 L479.34 485.31 L479.89 485.86 L479.62 486.89 L479.86 487.47 Z M478.00 488.40 A1.20 1.20 0 1 0 475.60 488.40 A1.20 1.20 0 1 0 478.00 488.40 Z"/><path fill="#d6d6d6" d="M484.54 485.00 L489.66 485.00 L489.66 486.04 L488.78 486.04 L488.78 488.84 L490.06 490.28 L490.06 491.08 L487.50 491.08 L487.34 493.40 L487.02 493.40 L486.86 491.08 L484.14 491.08 L484.14 490.28 L485.42 488.84 L485.42 486.04 L484.54 486.04 Z"/></svg>
<svg style="position:absolute;left:0;top:520px" width="1001" height="364" viewBox="0 520 1001 364"><path d="M114 573 L121.5 573 L117.75 577.5 Z" fill="#1a1a2e"/><path d="M253.6 571.5 L261.9 571.5 L257.75 566.9 Z M253.6 573.1 L261.9 573.1 L257.75 577.9 Z" fill="#d5d5d5"/><path d="M401.3 571.5 L409.6 571.5 L405.45 566.9 Z M401.3 573.1 L409.6 573.1 L405.45 577.9 Z" fill="#d5d5d5"/><path d="M616 571.5 L624.3 571.5 L620.15 566.9 Z M616 573.1 L624.3 573.1 L620.15 577.9 Z" fill="#d5d5d5"/><path d="M790.6 571.5 L798.9 571.5 L794.75 566.9 Z M790.6 573.1 L798.9 573.1 L794.75 577.9 Z" fill="#d5d5d5"/><rect x="51" y="583" width="936" height="1" fill="#e6e6e6"/><path fill-rule="evenodd" fill="#464646" d="M904.19 598.54 L904.19 599.26 L903.27 599.78 L903.08 600.34 L903.52 601.30 L903.10 601.89 L902.05 601.77 L901.57 602.12 L901.36 603.15 L900.67 603.37 L899.90 602.66 L899.30 602.66 L898.53 603.37 L897.84 603.15 L897.63 602.12 L897.15 601.77 L896.10 601.89 L895.68 601.30 L896.12 600.34 L895.93 599.78 L895.01 599.26 L895.01 598.54 L895.93 598.02 L896.12 597.46 L895.68 596.50 L896.10 595.91 L897.15 596.03 L897.63 595.68 L897.84 594.65 L898.53 594.43 L899.30 595.14 L899.90 595.14 L900.67 594.43 L901.36 594.65 L901.57 595.68 L902.05 596.03 L903.10 595.91 L903.52 596.50 L903.08 597.46 L903.27 598.02 Z M901.26 598.90 A1.66 1.66 0 1 0 897.94 598.90 A1.66 1.66 0 1 0 901.26 598.90 Z"/><path fill-rule="evenodd" fill="#464646" d="M896.88 604.48 L896.88 605.12 L896.05 605.52 L895.84 605.96 L896.05 606.85 L895.54 607.26 L894.72 606.85 L894.24 606.96 L893.68 607.68 L893.04 607.54 L892.84 606.64 L892.46 606.34 L891.54 606.34 L891.26 605.76 L891.84 605.04 L891.84 604.56 L891.26 603.84 L891.54 603.26 L892.46 603.26 L892.84 602.96 L893.04 602.06 L893.68 601.92 L894.24 602.64 L894.72 602.75 L895.54 602.34 L896.05 602.75 L895.84 603.64 L896.05 604.08 Z M894.87 604.80 A0.87 0.87 0 1 0 893.13 604.80 A0.87 0.87 0 1 0 894.87 604.80 Z"/><rect x="51" y="613" width="936" height="1" fill="#e6e6e6"/><path fill-rule="evenodd" fill="#464646" d="M904.19 628.54 L904.19 629.26 L903.27 629.78 L903.08 630.34 L903.52 631.30 L903.10 631.89 L902.05 631.77 L901.57 632.12 L901.36 633.15 L900.67 633.37 L899.90 632.66 L899.30 632.66 L898.53 633.37 L897.84 633.15 L897.63 632.12 L897.15 631.77 L896.10 631.89 L895.68 631.30 L896.12 630.34 L895.93 629.78 L895.01 629.26 L895.01 628.54 L895.93 628.02 L896.12 627.46 L895.68 626.50 L896.10 625.91 L897.15 626.03 L897.63 625.68 L897.84 624.65 L898.53 624.43 L899.30 625.14 L899.90 625.14 L900.67 624.43 L901.36 624.65 L901.57 625.68 L902.05 626.03 L903.10 625.91 L903.52 626.50 L903.08 627.46 L903.27 628.02 Z M901.26 628.90 A1.66 1.66 0 1 0 897.94 628.90 A1.66 1.66 0 1 0 901.26 628.90 Z"/><path fill-rule="evenodd" fill="#464646" d="M896.88 634.48 L896.88 635.12 L896.05 635.52 L895.84 635.96 L896.05 636.85 L895.54 637.26 L894.72 636.85 L894.24 636.96 L893.68 637.68 L893.04 637.54 L892.84 636.64 L892.46 636.34 L891.54 636.34 L891.26 635.76 L891.84 635.04 L891.84 634.56 L891.26 633.84 L891.54 633.26 L892.46 633.26 L892.84 632.96 L893.04 632.06 L893.68 631.92 L894.24 632.64 L894.72 632.75 L895.54 632.34 L896.05 632.75 L895.84 633.64 L896.05 634.08 Z M894.87 634.80 A0.87 0.87 0 1 0 893.13 634.80 A0.87 0.87 0 1 0 894.87 634.80 Z"/><rect x="51" y="643" width="936" height="1" fill="#e6e6e6"/><path fill-rule="evenodd" fill="#464646" d="M904.19 658.54 L904.19 659.26 L903.27 659.78 L903.08 660.34 L903.52 661.30 L903.10 661.89 L902.05 661.77 L901.57 662.12 L901.36 663.15 L900.67 663.37 L899.90 662.66 L899.30 662.66 L898.53 663.37 L897.84 663.15 L897.63 662.12 L897.15 661.77 L896.10 661.89 L895.68 661.30 L896.12 660.34 L895.93 659.78 L895.01 659.26 L895.01 658.54 L895.93 658.02 L896.12 657.46 L895.68 656.50 L896.10 655.91 L897.15 656.03 L897.63 655.68 L897.84 654.65 L898.53 654.43 L899.30 655.14 L899.90 655.14 L900.67 654.43 L901.36 654.65 L901.57 655.68 L902.05 656.03 L903.10 655.91 L903.52 656.50 L903.08 657.46 L903.27 658.02 Z M901.26 658.90 A1.66 1.66 0 1 0 897.94 658.90 A1.66 1.66 0 1 0 901.26 658.90 Z"/><path fill-rule="evenodd" fill="#464646" d="M896.88 664.48 L896.88 665.12 L896.05 665.52 L895.84 665.96 L896.05 666.85 L895.54 667.26 L894.72 666.85 L894.24 666.96 L893.68 667.68 L893.04 667.54 L892.84 666.64 L892.46 666.34 L891.54 666.34 L891.26 665.76 L891.84 665.04 L891.84 664.56 L891.26 663.84 L891.54 663.26 L892.46 663.26 L892.84 662.96 L893.04 662.06 L893.68 661.92 L894.24 662.64 L894.72 662.75 L895.54 662.34 L896.05 662.75 L895.84 663.64 L896.05 664.08 Z M894.87 664.80 A0.87 0.87 0 1 0 893.13 664.80 A0.87 0.87 0 1 0 894.87 664.80 Z"/><rect x="51" y="673" width="936" height="1" fill="#e6e6e6"/><path fill-rule="evenodd" fill="#464646" d="M904.19 688.54 L904.19 689.26 L903.27 689.78 L903.08 690.34 L903.52 691.30 L903.10 691.89 L902.05 691.77 L901.57 692.12 L901.36 693.15 L900.67 693.37 L899.90 692.66 L899.30 692.66 L898.53 693.37 L897.84 693.15 L897.63 692.12 L897.15 691.77 L896.10 691.89 L895.68 691.30 L896.12 690.34 L895.93 689.78 L895.01 689.26 L895.01 688.54 L895.93 688.02 L896.12 687.46 L895.68 686.50 L896.10 685.91 L897.15 686.03 L897.63 685.68 L897.84 684.65 L898.53 684.43 L899.30 685.14 L899.90 685.14 L900.67 684.43 L901.36 684.65 L901.57 685.68 L902.05 686.03 L903.10 685.91 L903.52 686.50 L903.08 687.46 L903.27 688.02 Z M901.26 688.90 A1.66 1.66 0 1 0 897.94 688.90 A1.66 1.66 0 1 0 901.26 688.90 Z"/><path fill-rule="evenodd" fill="#464646" d="M896.88 694.48 L896.88 695.12 L896.05 695.52 L895.84 695.96 L896.05 696.85 L895.54 697.26 L894.72 696.85 L894.24 696.96 L893.68 697.68 L893.04 697.54 L892.84 696.64 L892.46 696.34 L891.54 696.34 L891.26 695.76 L891.84 695.04 L891.84 694.56 L891.26 693.84 L891.54 693.26 L892.46 693.26 L892.84 692.96 L893.04 692.06 L893.68 691.92 L894.24 692.64 L894.72 692.75 L895.54 692.34 L896.05 692.75 L895.84 693.64 L896.05 694.08 Z M894.87 694.80 A0.87 0.87 0 1 0 893.13 694.80 A0.87 0.87 0 1 0 894.87 694.80 Z"/><rect x="51" y="703" width="936" height="1" fill="#e6e6e6"/><path fill-rule="evenodd" fill="#464646" d="M904.19 718.54 L904.19 719.26 L903.27 719.78 L903.08 720.34 L903.52 721.30 L903.10 721.89 L902.05 721.77 L901.57 722.12 L901.36 723.15 L900.67 723.37 L899.90 722.66 L899.30 722.66 L898.53 723.37 L897.84 723.15 L897.63 722.12 L897.15 721.77 L896.10 721.89 L895.68 721.30 L896.12 720.34 L895.93 719.78 L895.01 719.26 L895.01 718.54 L895.93 718.02 L896.12 717.46 L895.68 716.50 L896.10 715.91 L897.15 716.03 L897.63 715.68 L897.84 714.65 L898.53 714.43 L899.30 715.14 L899.90 715.14 L900.67 714.43 L901.36 714.65 L901.57 715.68 L902.05 716.03 L903.10 715.91 L903.52 716.50 L903.08 717.46 L903.27 718.02 Z M901.26 718.90 A1.66 1.66 0 1 0 897.94 718.90 A1.66 1.66 0 1 0 901.26 718.90 Z"/><path fill-rule="evenodd" fill="#464646" d="M896.88 724.48 L896.88 725.12 L896.05 725.52 L895.84 725.96 L896.05 726.85 L895.54 727.26 L894.72 726.85 L894.24 726.96 L893.68 727.68 L893.04 727.54 L892.84 726.64 L892.46 726.34 L891.54 726.34 L891.26 725.76 L891.84 725.04 L891.84 724.56 L891.26 723.84 L891.54 723.26 L892.46 723.26 L892.84 722.96 L893.04 722.06 L893.68 721.92 L894.24 722.64 L894.72 722.75 L895.54 722.34 L896.05 722.75 L895.84 723.64 L896.05 724.08 Z M894.87 724.80 A0.87 0.87 0 1 0 893.13 724.80 A0.87 0.87 0 1 0 894.87 724.80 Z"/><rect x="51" y="733" width="936" height="1" fill="#e6e6e6"/><path fill-rule="evenodd" fill="#464646" d="M904.19 748.54 L904.19 749.26 L903.27 749.78 L903.08 750.34 L903.52 751.30 L903.10 751.89 L902.05 751.77 L901.57 752.12 L901.36 753.15 L900.67 753.37 L899.90 752.66 L899.30 752.66 L898.53 753.37 L897.84 753.15 L897.63 752.12 L897.15 751.77 L896.10 751.89 L895.68 751.30 L896.12 750.34 L895.93 749.78 L895.01 749.26 L895.01 748.54 L895.93 748.02 L896.12 747.46 L895.68 746.50 L896.10 745.91 L897.15 746.03 L897.63 745.68 L897.84 744.65 L898.53 744.43 L899.30 745.14 L899.90 745.14 L900.67 744.43 L901.36 744.65 L901.57 745.68 L902.05 746.03 L903.10 745.91 L903.52 746.50 L903.08 747.46 L903.27 748.02 Z M901.26 748.90 A1.66 1.66 0 1 0 897.94 748.90 A1.66 1.66 0 1 0 901.26 748.90 Z"/><path fill-rule="evenodd" fill="#464646" d="M896.88 754.48 L896.88 755.12 L896.05 755.52 L895.84 755.96 L896.05 756.85 L895.54 757.26 L894.72 756.85 L894.24 756.96 L893.68 757.68 L893.04 757.54 L892.84 756.64 L892.46 756.34 L891.54 756.34 L891.26 755.76 L891.84 755.04 L891.84 754.56 L891.26 753.84 L891.54 753.26 L892.46 753.26 L892.84 752.96 L893.04 752.06 L893.68 751.92 L894.24 752.64 L894.72 752.75 L895.54 752.34 L896.05 752.75 L895.84 753.64 L896.05 754.08 Z M894.87 754.80 A0.87 0.87 0 1 0 893.13 754.80 A0.87 0.87 0 1 0 894.87 754.80 Z"/><rect x="51" y="763" width="936" height="1" fill="#e6e6e6"/><path fill-rule="evenodd" fill="#464646" d="M904.19 778.54 L904.19 779.26 L903.27 779.78 L903.08 780.34 L903.52 781.30 L903.10 781.89 L902.05 781.77 L901.57 782.12 L901.36 783.15 L900.67 783.37 L899.90 782.66 L899.30 782.66 L898.53 783.37 L897.84 783.15 L897.63 782.12 L897.15 781.77 L896.10 781.89 L895.68 781.30 L896.12 780.34 L895.93 779.78 L895.01 779.26 L895.01 778.54 L895.93 778.02 L896.12 777.46 L895.68 776.50 L896.10 775.91 L897.15 776.03 L897.63 775.68 L897.84 774.65 L898.53 774.43 L899.30 775.14 L899.90 775.14 L900.67 774.43 L901.36 774.65 L901.57 775.68 L902.05 776.03 L903.10 775.91 L903.52 776.50 L903.08 777.46 L903.27 778.02 Z M901.26 778.90 A1.66 1.66 0 1 0 897.94 778.90 A1.66 1.66 0 1 0 901.26 778.90 Z"/><path fill-rule="evenodd" fill="#464646" d="M896.88 784.48 L896.88 785.12 L896.05 785.52 L895.84 785.96 L896.05 786.85 L895.54 787.26 L894.72 786.85 L894.24 786.96 L893.68 787.68 L893.04 787.54 L892.84 786.64 L892.46 786.34 L891.54 786.34 L891.26 785.76 L891.84 785.04 L891.84 784.56 L891.26 783.84 L891.54 783.26 L892.46 783.26 L892.84 782.96 L893.04 782.06 L893.68 781.92 L894.24 782.64 L894.72 782.75 L895.54 782.34 L896.05 782.75 L895.84 783.64 L896.05 784.08 Z M894.87 784.80 A0.87 0.87 0 1 0 893.13 784.80 A0.87 0.87 0 1 0 894.87 784.80 Z"/><rect x="51" y="793" width="936" height="1" fill="#e6e6e6"/><path fill-rule="evenodd" fill="#464646" d="M904.19 808.54 L904.19 809.26 L903.27 809.78 L903.08 810.34 L903.52 811.30 L903.10 811.89 L902.05 811.77 L901.57 812.12 L901.36 813.15 L900.67 813.37 L899.90 812.66 L899.30 812.66 L898.53 813.37 L897.84 813.15 L897.63 812.12 L897.15 811.77 L896.10 811.89 L895.68 811.30 L896.12 810.34 L895.93 809.78 L895.01 809.26 L895.01 808.54 L895.93 808.02 L896.12 807.46 L895.68 806.50 L896.10 805.91 L897.15 806.03 L897.63 805.68 L897.84 804.65 L898.53 804.43 L899.30 805.14 L899.90 805.14 L900.67 804.43 L901.36 804.65 L901.57 805.68 L902.05 806.03 L903.10 805.91 L903.52 806.50 L903.08 807.46 L903.27 808.02 Z M901.26 808.90 A1.66 1.66 0 1 0 897.94 808.90 A1.66 1.66 0 1 0 901.26 808.90 Z"/><path fill-rule="evenodd" fill="#464646" d="M896.88 814.48 L896.88 815.12 L896.05 815.52 L895.84 815.96 L896.05 816.85 L895.54 817.26 L894.72 816.85 L894.24 816.96 L893.68 817.68 L893.04 817.54 L892.84 816.64 L892.46 816.34 L891.54 816.34 L891.26 815.76 L891.84 815.04 L891.84 814.56 L891.26 813.84 L891.54 813.26 L892.46 813.26 L892.84 812.96 L893.04 812.06 L893.68 811.92 L894.24 812.64 L894.72 812.75 L895.54 812.34 L896.05 812.75 L895.84 813.64 L896.05 814.08 Z M894.87 814.80 A0.87 0.87 0 1 0 893.13 814.80 A0.87 0.87 0 1 0 894.87 814.80 Z"/><rect x="51" y="823" width="936" height="1" fill="#e6e6e6"/><path fill-rule="evenodd" fill="#464646" d="M904.19 838.54 L904.19 839.26 L903.27 839.78 L903.08 840.34 L903.52 841.30 L903.10 841.89 L902.05 841.77 L901.57 842.12 L901.36 843.15 L900.67 843.37 L899.90 842.66 L899.30 842.66 L898.53 843.37 L897.84 843.15 L897.63 842.12 L897.15 841.77 L896.10 841.89 L895.68 841.30 L896.12 840.34 L895.93 839.78 L895.01 839.26 L895.01 838.54 L895.93 838.02 L896.12 837.46 L895.68 836.50 L896.10 835.91 L897.15 836.03 L897.63 835.68 L897.84 834.65 L898.53 834.43 L899.30 835.14 L899.90 835.14 L900.67 834.43 L901.36 834.65 L901.57 835.68 L902.05 836.03 L903.10 835.91 L903.52 836.50 L903.08 837.46 L903.27 838.02 Z M901.26 838.90 A1.66 1.66 0 1 0 897.94 838.90 A1.66 1.66 0 1 0 901.26 838.90 Z"/><path fill-rule="evenodd" fill="#464646" d="M896.88 844.48 L896.88 845.12 L896.05 845.52 L895.84 845.96 L896.05 846.85 L895.54 847.26 L894.72 846.85 L894.24 846.96 L893.68 847.68 L893.04 847.54 L892.84 846.64 L892.46 846.34 L891.54 846.34 L891.26 845.76 L891.84 845.04 L891.84 844.56 L891.26 843.84 L891.54 843.26 L892.46 843.26 L892.84 842.96 L893.04 842.06 L893.68 841.92 L894.24 842.64 L894.72 842.75 L895.54 842.34 L896.05 842.75 L895.84 843.64 L896.05 844.08 Z M894.87 844.80 A0.87 0.87 0 1 0 893.13 844.80 A0.87 0.87 0 1 0 894.87 844.80 Z"/><rect x="51" y="853" width="936" height="1" fill="#e6e6e6"/><path fill-rule="evenodd" fill="#464646" d="M904.19 868.54 L904.19 869.26 L903.27 869.78 L903.08 870.34 L903.52 871.30 L903.10 871.89 L902.05 871.77 L901.57 872.12 L901.36 873.15 L900.67 873.37 L899.90 872.66 L899.30 872.66 L898.53 873.37 L897.84 873.15 L897.63 872.12 L897.15 871.77 L896.10 871.89 L895.68 871.30 L896.12 870.34 L895.93 869.78 L895.01 869.26 L895.01 868.54 L895.93 868.02 L896.12 867.46 L895.68 866.50 L896.10 865.91 L897.15 866.03 L897.63 865.68 L897.84 864.65 L898.53 864.43 L899.30 865.14 L899.90 865.14 L900.67 864.43 L901.36 864.65 L901.57 865.68 L902.05 866.03 L903.10 865.91 L903.52 866.50 L903.08 867.46 L903.27 868.02 Z M901.26 868.90 A1.66 1.66 0 1 0 897.94 868.90 A1.66 1.66 0 1 0 901.26 868.90 Z"/><path fill-rule="evenodd" fill="#464646" d="M896.88 874.48 L896.88 875.12 L896.05 875.52 L895.84 875.96 L896.05 876.85 L895.54 877.26 L894.72 876.85 L894.24 876.96 L893.68 877.68 L893.04 877.54 L892.84 876.64 L892.46 876.34 L891.54 876.34 L891.26 875.76 L891.84 875.04 L891.84 874.56 L891.26 873.84 L891.54 873.26 L892.46 873.26 L892.84 872.96 L893.04 872.06 L893.68 871.92 L894.24 872.64 L894.72 872.75 L895.54 872.34 L896.05 872.75 L895.84 873.64 L896.05 874.08 Z M894.87 874.80 A0.87 0.87 0 1 0 893.13 874.80 A0.87 0.87 0 1 0 894.87 874.80 Z"/><rect x="51" y="883" width="936" height="1" fill="#e6e6e6"/></svg>
<svg style="position:absolute;left:0;top:0" width="1001" height="884" font-family="Liberation Sans"><text x="0" y="0" transform="matrix(0.9224 0 0 1 29.20 24)" font-size="18" fill="#fff" font-style="italic" stroke="#fff" stroke-width="0.35">Sensor</text><text x="0" y="0" transform="matrix(1.0341 0 0 1 88.70 24)" font-size="18" fill="#fff" stroke="#fff" stroke-width="0.35">WMI HDD Health</text><text x="0" y="0" transform="matrix(0.9235 0 0 1 52.00 44)" font-size="12" fill="#fff" stroke="#fff" stroke-width="0.4">OK</text><text x="0" y="0" transform="matrix(1.0088 0 0 1 77.90 99)" font-size="13.5" fill="#4a4a4a" stroke="#4a4a4a" stroke-width="0.55">Overview</text><text x="0" y="0" transform="matrix(0.9828 0 0 1 215.00 99)" font-size="13.5" fill="#555555" stroke="#555555" stroke-width="0.2">Live Data</text><text x="0" y="0" transform="matrix(0.9500 0 0 1 335.00 99)" font-size="13.5" fill="#4a4a4a" font-weight="bold" stroke="#4a4a4a" stroke-width="0.2">2</text><text x="0" y="0" transform="matrix(0.9724 0 0 1 353.60 99)" font-size="13.5" fill="#555555" stroke="#555555" stroke-width="0.2">days</text><text x="0" y="0" transform="matrix(1.0333 0 0 1 440.50 99)" font-size="13.5" fill="#4a4a4a" font-weight="bold" stroke="#4a4a4a" stroke-width="0.2">30</text><text x="0" y="0" transform="matrix(0.9828 0 0 1 462.50 99)" font-size="13.5" fill="#555555" stroke="#555555" stroke-width="0.2">days</text><text x="0" y="0" transform="matrix(1.0348 0 0 1 548.00 99)" font-size="13.5" fill="#4a4a4a" font-weight="bold" stroke="#4a4a4a" stroke-width="0.2">365</text><text x="576.80" y="99" font-size="13.5" fill="#555555" stroke="#555555" stroke-width="0.2">days</text><text x="0" y="0" transform="matrix(1.0423 0 0 1 687.40 99)" font-size="13.5" fill="#555555" stroke="#555555" stroke-width="0.2">Historic Data</text><text x="0" y="0" transform="matrix(1.0409 0 0 1 847.80 99)" font-size="13.5" fill="#555555" stroke="#555555" stroke-width="0.2">Log</text><text x="0" y="0" transform="matrix(1.0449 0 0 1 947.60 99)" font-size="13.5" fill="#555555" stroke="#555555" stroke-width="0.2">Settings</text><text x="0" y="0" transform="matrix(0.9933 0 0 1 41.70 155)" font-size="12.5" fill="#4d4d4d" stroke="#4d4d4d" stroke-width="0.2">001: Read Error Rate</text><text x="0" y="0" transform="matrix(1.0078 0 0 1 41.75 342)" font-size="13" fill="#4d4d4d" stroke="#4d4d4d" stroke-width="0.2">119 #</text><text x="0" y="0" transform="matrix(0.8857 0 0 1 182.00 335)" font-size="12" fill="#333" stroke="#333" stroke-width="0.1">0</text><text x="0" y="0" transform="matrix(0.9533 0 0 1 276.80 335)" font-size="12" fill="#333" stroke="#333" stroke-width="0.1">119 #</text><text x="0" y="0" transform="matrix(1.0800 0 0 1 299.60 315)" font-size="9.5" fill="#8a94a0">x</text><text x="0" y="0" transform="matrix(1.0962 0 0 1 348.00 153)" font-size="9.4" fill="#4d4d4d" stroke="#4d4d4d" stroke-width="0.2">003: Spin-Up Time</text><text x="0" y="0" transform="matrix(1.1000 0 0 1 348.40 196)" font-size="9.4" fill="#4d4d4d" stroke="#4d4d4d" stroke-width="0.2">98 #</text><text x="0" y="0" transform="matrix(1.0962 0 0 1 502.00 153)" font-size="9.4" fill="#4d4d4d" stroke="#4d4d4d" stroke-width="0.2">004: Start/Stop Count</text><text x="0" y="0" transform="matrix(1.1000 0 0 1 502.40 196)" font-size="9.4" fill="#4d4d4d" stroke="#4d4d4d" stroke-width="0.2">83 #</text><text x="0" y="0" transform="matrix(1.0962 0 0 1 656.00 153)" font-size="9.4" fill="#4d4d4d" stroke="#4d4d4d" stroke-width="0.2">005: Reallocated Secto...</text><text x="0" y="0" transform="matrix(1.1000 0 0 1 656.40 196)" font-size="9.4" fill="#4d4d4d" stroke="#4d4d4d" stroke-width="0.2">100 #</text><text x="0" y="0" transform="matrix(1.0962 0 0 1 810.00 153)" font-size="9.4" fill="#4d4d4d" stroke="#4d4d4d" stroke-width="0.2">007: Seek Error Rate</text><text x="0" y="0" transform="matrix(1.1000 0 0 1 810.40 196)" font-size="9.4" fill="#4d4d4d" stroke="#4d4d4d" stroke-width="0.2">80 #</text><text x="0" y="0" transform="matrix(1.0962 0 0 1 348.00 226)" font-size="9.4" fill="#4d4d4d" stroke="#4d4d4d" stroke-width="0.2">009: Power-On Hours</text><text x="0" y="0" transform="matrix(1.1000 0 0 1 348.40 269)" font-size="9.4" fill="#4d4d4d" stroke="#4d4d4d" stroke-width="0.2">84 #</text><text x="0" y="0" transform="matrix(1.0962 0 0 1 502.00 226)" font-size="9.4" fill="#4d4d4d" stroke="#4d4d4d" stroke-width="0.2">010: Spin Retry Count</text><text x="0" y="0" transform="matrix(1.1000 0 0 1 502.40 269)" font-size="9.4" fill="#4d4d4d" stroke="#4d4d4d" stroke-width="0.2">100 #</text><text x="0" y="0" transform="matrix(1.0962 0 0 1 656.00 226)" font-size="9.4" fill="#4d4d4d" stroke="#4d4d4d" stroke-width="0.2">012: Power Cycle Count</text><text x="0" y="0" transform="matrix(1.1000 0 0 1 656.40 269)" font-size="9.4" fill="#4d4d4d" stroke="#4d4d4d" stroke-width="0.2">92 #</text><text x="0" y="0" transform="matrix(1.0962 0 0 1 810.00 226)" font-size="9.4" fill="#4d4d4d" stroke="#4d4d4d" stroke-width="0.2">183: SATA Downshift E...</text><text x="0" y="0" transform="matrix(1.1000 0 0 1 810.40 269)" font-size="9.4" fill="#4d4d4d" stroke="#4d4d4d" stroke-width="0.2">100 #</text><text x="0" y="0" transform="matrix(1.0962 0 0 1 348.00 299)" font-size="9.4" fill="#4d4d4d" stroke="#4d4d4d" stroke-width="0.2">184: End-to-End error /...</text><text x="0" y="0" transform="matrix(1.1000 0 0 1 348.40 342)" font-size="9.4" fill="#4d4d4d" stroke="#4d4d4d" stroke-width="0.2">100 #</text><text x="0" y="0" transform="matrix(1.0962 0 0 1 502.00 299)" font-size="9.4" fill="#4d4d4d" stroke="#4d4d4d" stroke-width="0.2">187: Reported Uncorre...</text><text x="0" y="0" transform="matrix(1.1000 0 0 1 502.40 342)" font-size="9.4" fill="#4d4d4d" stroke="#4d4d4d" stroke-width="0.2">100 #</text><text x="0" y="0" transform="matrix(1.0962 0 0 1 656.00 299)" font-size="9.4" fill="#4d4d4d" stroke="#4d4d4d" stroke-width="0.2">188: Command Timeout</text><text x="0" y="0" transform="matrix(1.1000 0 0 1 656.40 342)" font-size="9.4" fill="#4d4d4d" stroke="#4d4d4d" stroke-width="0.2">100 #</text><text x="0" y="0" transform="matrix(1.0962 0 0 1 810.00 299)" font-size="9.4" fill="#4d4d4d" stroke="#4d4d4d" stroke-width="0.2">189: High Fly Writes</text><text x="0" y="0" transform="matrix(1.1000 0 0 1 810.40 342)" font-size="9.4" fill="#4d4d4d" stroke="#4d4d4d" stroke-width="0.2">100 #</text><text x="0" y="0" transform="matrix(1.0962 0 0 1 41.00 372)" font-size="9.4" fill="#4d4d4d" stroke="#4d4d4d" stroke-width="0.2">190: Airflow Temperat...</text><text x="0" y="0" transform="matrix(1.1000 0 0 1 41.40 415)" font-size="9.4" fill="#4d4d4d" stroke="#4d4d4d" stroke-width="0.2">60 #</text><text x="0" y="0" transform="matrix(1.0962 0 0 1 195.00 372)" font-size="9.4" fill="#4d4d4d" stroke="#4d4d4d" stroke-width="0.2">194: Temperature Cels...</text><text x="0" y="0" transform="matrix(1.1000 0 0 1 195.40 415)" font-size="9.4" fill="#4d4d4d" stroke="#4d4d4d" stroke-width="0.2">40 #</text><text x="0" y="0" transform="matrix(1.0962 0 0 1 349.00 372)" font-size="9.4" fill="#4d4d4d" stroke="#4d4d4d" stroke-width="0.2">195: Hardware ECC Re...</text><text x="0" y="0" transform="matrix(1.1000 0 0 1 349.40 415)" font-size="9.4" fill="#4d4d4d" stroke="#4d4d4d" stroke-width="0.2">37 #</text><text x="0" y="0" transform="matrix(1.0962 0 0 1 503.00 372)" font-size="9.4" fill="#4d4d4d" stroke="#4d4d4d" stroke-width="0.2">197: Current Pending S...</text><text x="0" y="0" transform="matrix(1.1000 0 0 1 503.40 415)" font-size="9.4" fill="#4d4d4d" stroke="#4d4d4d" stroke-width="0.2">100 #</text><text x="0" y="0" transform="matrix(1.0962 0 0 1 657.00 372)" font-size="9.4" fill="#4d4d4d" stroke="#4d4d4d" stroke-width="0.2">198: Uncorrectable Se...</text><text x="0" y="0" transform="matrix(1.1000 0 0 1 657.40 415)" font-size="9.4" fill="#4d4d4d" stroke="#4d4d4d" stroke-width="0.2">100 #</text><text x="0" y="0" transform="matrix(1.0962 0 0 1 811.00 372)" font-size="9.4" fill="#4d4d4d" stroke="#4d4d4d" stroke-width="0.2">199: UltraDMA CRC Err...</text><text x="0" y="0" transform="matrix(1.1000 0 0 1 811.40 415)" font-size="9.4" fill="#4d4d4d" stroke="#4d4d4d" stroke-width="0.2">200 #</text><text x="0" y="0" transform="matrix(1.0962 0 0 1 41.00 445)" font-size="9.4" fill="#4d4d4d" stroke="#4d4d4d" stroke-width="0.2">240: Transfer Error Rate</text><text x="0" y="0" transform="matrix(1.1000 0 0 1 41.40 488)" font-size="9.4" fill="#4d4d4d" stroke="#4d4d4d" stroke-width="0.2">100 #</text><text x="0" y="0" transform="matrix(1.0962 0 0 1 195.00 445)" font-size="9.4" fill="#4d4d4d" stroke="#4d4d4d" stroke-width="0.2">241: Total LBAs Written</text><text x="0" y="0" transform="matrix(1.1000 0 0 1 195.40 488)" font-size="9.4" fill="#4d4d4d" stroke="#4d4d4d" stroke-width="0.2">100 #</text><text x="0" y="0" transform="matrix(1.0962 0 0 1 349.00 445)" font-size="9.4" fill="#4d4d4d" stroke="#4d4d4d" stroke-width="0.2">242: Total LBAs Read</text><text x="0" y="0" transform="matrix(1.1000 0 0 1 349.40 488)" font-size="9.4" fill="#4d4d4d" stroke="#4d4d4d" stroke-width="0.2">100 #</text><text x="61.50" y="577" font-size="12.5" fill="#2b2b3a" stroke="#2b2b3a" stroke-width="0.1">Channel</text><text x="0" y="0" transform="matrix(0.8000 0 0 1 236.60 577)" font-size="12.5" fill="#2b2b3a" stroke="#2b2b3a" stroke-width="0.1">ID</text><text x="0" y="0" transform="matrix(1.0345 0 0 1 336.00 577)" font-size="12.5" fill="#2b2b3a" stroke="#2b2b3a" stroke-width="0.1">Last Value</text><text x="0" y="0" transform="matrix(1.0431 0 0 1 556.20 577)" font-size="12.5" fill="#2b2b3a" stroke="#2b2b3a" stroke-width="0.1">Minimum</text><text x="0" y="0" transform="matrix(1.0519 0 0 1 728.00 577)" font-size="12.5" fill="#2b2b3a" stroke="#2b2b3a" stroke-width="0.1">Maximum</text><text x="0" y="0" transform="matrix(0.9874 0 0 1 61.50 607)" font-size="12.5" fill="#555555" stroke="#555555" stroke-width="0.12">001: Read Error Rate</text><text x="0" y="0" transform="matrix(1.0516 0 0 1 236.60 607)" font-size="12.5" fill="#555555" stroke="#555555" stroke-width="0.12">2</text><text x="0" y="0" transform="matrix(1.0516 0 0 1 358.00 607)" font-size="12.5" fill="#555555" stroke="#555555" stroke-width="0.12">119 #</text><text x="0" y="0" transform="matrix(1.0516 0 0 1 593.40 607)" font-size="12.5" fill="#555555" stroke="#555555" stroke-width="0.12">119 #</text><text x="0" y="0" transform="matrix(1.0516 0 0 1 768.10 607)" font-size="12.5" fill="#555555" stroke="#555555" stroke-width="0.12">119 #</text><text x="0" y="0" transform="matrix(1.0077 0 0 1 61.50 637)" font-size="12.5" fill="#555555" stroke="#555555" stroke-width="0.12">003: Spin-Up Time</text><text x="0" y="0" transform="matrix(1.0516 0 0 1 236.60 637)" font-size="12.5" fill="#555555" stroke="#555555" stroke-width="0.12">3</text><text x="0" y="0" transform="matrix(1.0516 0 0 1 361.15 637)" font-size="12.5" fill="#555555" stroke="#555555" stroke-width="0.12">98 #</text><text x="0" y="0" transform="matrix(1.0516 0 0 1 599.71 637)" font-size="12.5" fill="#555555" stroke="#555555" stroke-width="0.12">98 #</text><text x="0" y="0" transform="matrix(1.0516 0 0 1 774.41 637)" font-size="12.5" fill="#555555" stroke="#555555" stroke-width="0.12">98 #</text><text x="0" y="0" transform="matrix(1.0306 0 0 1 61.50 667)" font-size="12.5" fill="#555555" stroke="#555555" stroke-width="0.12">004: Start/Stop Count</text><text x="0" y="0" transform="matrix(1.0516 0 0 1 236.60 667)" font-size="12.5" fill="#555555" stroke="#555555" stroke-width="0.12">4</text><text x="0" y="0" transform="matrix(1.0516 0 0 1 361.15 667)" font-size="12.5" fill="#555555" stroke="#555555" stroke-width="0.12">83 #</text><text x="0" y="0" transform="matrix(1.0516 0 0 1 599.71 667)" font-size="12.5" fill="#555555" stroke="#555555" stroke-width="0.12">83 #</text><text x="0" y="0" transform="matrix(1.0516 0 0 1 774.41 667)" font-size="12.5" fill="#555555" stroke="#555555" stroke-width="0.12">83 #</text><text x="61.50" y="697" font-size="12.5" fill="#555555" stroke="#555555" stroke-width="0.12">005: Reallocated Sectors…</text><text x="0" y="0" transform="matrix(1.0516 0 0 1 236.60 697)" font-size="12.5" fill="#555555" stroke="#555555" stroke-width="0.12">5</text><text x="0" y="0" transform="matrix(1.0516 0 0 1 357.47 697)" font-size="12.5" fill="#555555" stroke="#555555" stroke-width="0.12">100 #</text><text x="0" y="0" transform="matrix(1.0516 0 0 1 592.35 697)" font-size="12.5" fill="#555555" stroke="#555555" stroke-width="0.12">100 #</text><text x="0" y="0" transform="matrix(1.0516 0 0 1 767.05 697)" font-size="12.5" fill="#555555" stroke="#555555" stroke-width="0.12">100 #</text><text x="0" y="0" transform="matrix(0.9847 0 0 1 61.50 727)" font-size="12.5" fill="#555555" stroke="#555555" stroke-width="0.12">007: Seek Error Rate</text><text x="0" y="0" transform="matrix(1.0516 0 0 1 236.60 727)" font-size="12.5" fill="#555555" stroke="#555555" stroke-width="0.12">6</text><text x="0" y="0" transform="matrix(1.0516 0 0 1 361.15 727)" font-size="12.5" fill="#555555" stroke="#555555" stroke-width="0.12">80 #</text><text x="0" y="0" transform="matrix(1.0516 0 0 1 599.71 727)" font-size="12.5" fill="#555555" stroke="#555555" stroke-width="0.12">80 #</text><text x="0" y="0" transform="matrix(1.0516 0 0 1 774.41 727)" font-size="12.5" fill="#555555" stroke="#555555" stroke-width="0.12">80 #</text><text x="0" y="0" transform="matrix(1.0058 0 0 1 61.50 757)" font-size="12.5" fill="#555555" stroke="#555555" stroke-width="0.12">009: Power-On Hours</text><text x="0" y="0" transform="matrix(1.0516 0 0 1 236.60 757)" font-size="12.5" fill="#555555" stroke="#555555" stroke-width="0.12">7</text><text x="0" y="0" transform="matrix(1.0516 0 0 1 361.15 757)" font-size="12.5" fill="#555555" stroke="#555555" stroke-width="0.12">84 #</text><text x="0" y="0" transform="matrix(1.0516 0 0 1 599.71 757)" font-size="12.5" fill="#555555" stroke="#555555" stroke-width="0.12">84 #</text><text x="0" y="0" transform="matrix(1.0516 0 0 1 774.41 757)" font-size="12.5" fill="#555555" stroke="#555555" stroke-width="0.12">84 #</text><text x="0" y="0" transform="matrix(0.9952 0 0 1 61.50 787)" font-size="12.5" fill="#555555" stroke="#555555" stroke-width="0.12">010: Spin Retry Count</text><text x="0" y="0" transform="matrix(1.0516 0 0 1 236.60 787)" font-size="12.5" fill="#555555" stroke="#555555" stroke-width="0.12">8</text><text x="0" y="0" transform="matrix(1.0516 0 0 1 357.47 787)" font-size="12.5" fill="#555555" stroke="#555555" stroke-width="0.12">100 #</text><text x="0" y="0" transform="matrix(1.0516 0 0 1 592.35 787)" font-size="12.5" fill="#555555" stroke="#555555" stroke-width="0.12">100 #</text><text x="0" y="0" transform="matrix(1.0516 0 0 1 767.05 787)" font-size="12.5" fill="#555555" stroke="#555555" stroke-width="0.12">100 #</text><text x="0" y="0" transform="matrix(1.0104 0 0 1 61.50 817)" font-size="12.5" fill="#555555" stroke="#555555" stroke-width="0.12">012: Power Cycle Count</text><text x="0" y="0" transform="matrix(1.0516 0 0 1 236.60 817)" font-size="12.5" fill="#555555" stroke="#555555" stroke-width="0.12">9</text><text x="0" y="0" transform="matrix(1.0516 0 0 1 361.15 817)" font-size="12.5" fill="#555555" stroke="#555555" stroke-width="0.12">92 #</text><text x="0" y="0" transform="matrix(1.0516 0 0 1 599.71 817)" font-size="12.5" fill="#555555" stroke="#555555" stroke-width="0.12">92 #</text><text x="0" y="0" transform="matrix(1.0516 0 0 1 774.41 817)" font-size="12.5" fill="#555555" stroke="#555555" stroke-width="0.12">92 #</text><text x="0" y="0" transform="matrix(1.0041 0 0 1 61.50 847)" font-size="12.5" fill="#555555" stroke="#555555" stroke-width="0.12">183: SATA Downshift Err…</text><text x="0" y="0" transform="matrix(1.0516 0 0 1 236.60 847)" font-size="12.5" fill="#555555" stroke="#555555" stroke-width="0.12">10</text><text x="0" y="0" transform="matrix(1.0516 0 0 1 357.47 847)" font-size="12.5" fill="#555555" stroke="#555555" stroke-width="0.12">100 #</text><text x="0" y="0" transform="matrix(1.0516 0 0 1 592.35 847)" font-size="12.5" fill="#555555" stroke="#555555" stroke-width="0.12">100 #</text><text x="0" y="0" transform="matrix(1.0516 0 0 1 767.05 847)" font-size="12.5" fill="#555555" stroke="#555555" stroke-width="0.12">100 #</text><text x="0" y="0" transform="matrix(0.9821 0 0 1 61.50 877)" font-size="12.5" fill="#555555" stroke="#555555" stroke-width="0.12">184: End-to-End error / IO…</text><text x="0" y="0" transform="matrix(1.0516 0 0 1 236.60 877)" font-size="12.5" fill="#555555" stroke="#555555" stroke-width="0.12">11</text><text x="0" y="0" transform="matrix(1.0516 0 0 1 357.47 877)" font-size="12.5" fill="#555555" stroke="#555555" stroke-width="0.12">100 #</text><text x="0" y="0" transform="matrix(1.0516 0 0 1 592.35 877)" font-size="12.5" fill="#555555" stroke="#555555" stroke-width="0.12">100 #</text><text x="0" y="0" transform="matrix(1.0516 0 0 1 767.05 877)" font-size="12.5" fill="#555555" stroke="#555555" stroke-width="0.12">100 #</text></svg>
</body></html>
